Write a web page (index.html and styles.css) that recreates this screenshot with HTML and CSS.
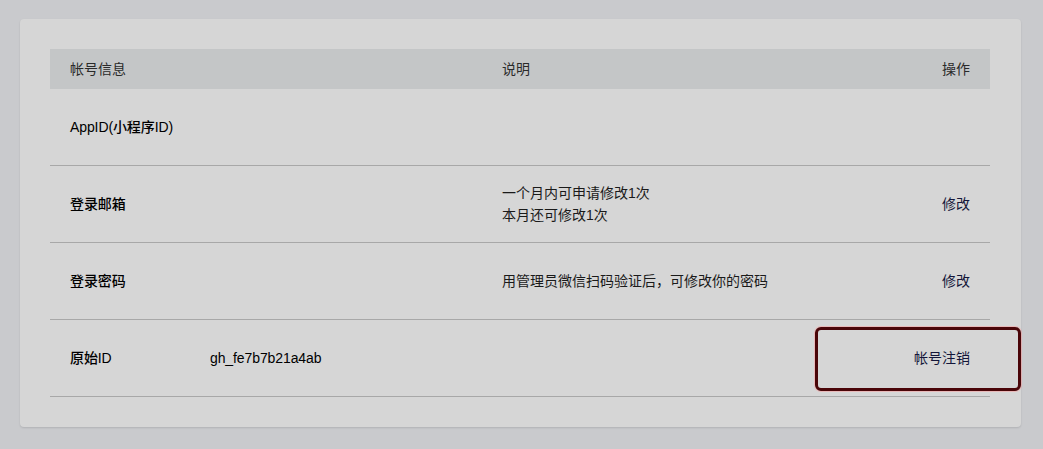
FILE: index.html
```html
<!DOCTYPE html>
<html lang="zh-CN">
<head>
<meta charset="utf-8">
<title>帐号信息</title>
<link rel="stylesheet" href="styles.css">
</head>
<body>
<div class="page">
  <div class="card">
    <div class="table">
      <div class="row head">
        <div class="cell">帐号信息</div>
        <div class="cell">说明</div>
        <div class="cell op">操作</div>
      </div>
      <div class="row">
        <div class="cell label">AppID(小程序ID)</div>
        <div class="cell"></div>
        <div class="cell op"></div>
      </div>
      <div class="row">
        <div class="cell label">登录邮箱</div>
        <div class="cell desc">一个月内可申请修改1次<br>本月还可修改1次</div>
        <div class="cell op"><a class="link">修改</a></div>
      </div>
      <div class="row">
        <div class="cell label">登录密码</div>
        <div class="cell desc">用管理员微信扫码验证后，可修改你的密码</div>
        <div class="cell op"><a class="link">修改</a></div>
      </div>
      <div class="row">
        <div class="cell label"><span class="key">原始ID</span><span class="value">gh_fe7b7b21a4ab</span></div>
        <div class="cell"></div>
        <div class="cell op"><a class="link">帐号注销</a></div>
      </div>
    </div>
  </div>
  <div class="highlight"></div>
</div>
</body>
</html>
```
FILE: styles.css
```css
html, body {
  margin: 0;
  padding: 0;
  background: #c9cacd;
}
body {
  font-family: "Liberation Sans", "Noto Sans CJK SC", sans-serif;
  font-size: 14px;
  color: #111;
}
.page {
  position: relative;
  padding: 19px 22px 22px 20px;
}
.card {
  background: #d6d6d6;
  border-radius: 4px;
  padding: 30px 31px 30px 30px;
  box-shadow: 0 1px 2px rgba(0, 0, 0, 0.12);
}
.table {
  display: flex;
  flex-direction: column;
}
.row {
  display: grid;
  grid-template-columns: 432px 1fr auto;
  align-items: center;
  height: 76px;
  border-bottom: 1px solid #a8a8a8;
}
.row.head {
  height: 40px;
  background: #c4c6c7;
  border-bottom: none;
  color: #2a2a2a;
}
.cell {
  padding: 0 20px;
  line-height: 18px;
}
.op {
  text-align: right;
}
.desc {
  line-height: 22px;
  color: #1a1a1a;
}
.label {
  display: flex;
  color: #000;
  font-weight: 500;
  letter-spacing: -0.1px;
}
.key {
  width: 140px;
}
.link {
  color: #14163a;
  text-decoration: none;
}
.highlight {
  position: absolute;
  left: 815px;
  top: 327px;
  width: 200px;
  height: 58px;
  border: 3px solid #4a0508;
  border-radius: 6px;
  box-shadow: 0 0 0 1px rgba(255, 150, 150, 0.45);
}
```
